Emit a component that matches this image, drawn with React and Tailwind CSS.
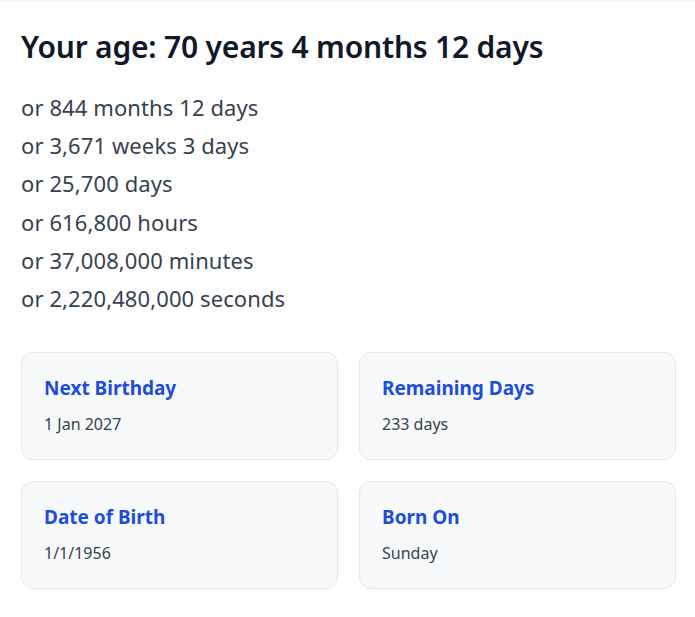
import React from 'react';

const lines = [
    'or 844 months 12 days',
    'or 3,671 weeks 3 days',
    'or 25,700 days',
    'or 616,800 hours',
    'or 37,008,000 minutes',
    'or 2,220,480,000 seconds',
];

const cards = [
    { title: 'Next Birthday', value: '1 Jan 2027' },
    { title: 'Remaining Days', value: '233 days' },
    { title: 'Date of Birth', value: '1/1/1956' },
    { title: 'Born On', value: 'Sunday' },
];

export default function App() {
    return (
        <div
            className="min-h-screen bg-white border-t border-gray-100 pl-[21px] pr-[19px] pt-[26px] pb-8"
            style={{ fontFamily: '"Noto Sans", "Open Sans", sans-serif' }}
        >
            {/* Heading */}
            <h1 className="text-[30px] font-semibold leading-[40px] text-[#111827] tracking-[-0.2px]">
                Your age: 70 years 4 months 12 days
            </h1>

            {/* Alternate units */}
            <div className="mt-[21px]">
                {lines.map((line) => (
                    <p key={line} className="text-[22px] leading-[38.2px] text-[#374151] tracking-[0.1px]">
                        {line}
                    </p>
                ))}
            </div>

            {/* Info cards */}
            <div className="mt-[35px] grid grid-cols-2 gap-[21px]">
                {cards.map((card) => (
                    <div
                        key={card.title}
                        className="h-[108px] rounded-xl border border-[#e5e7eb] bg-[#f8f9fb] px-[22px] pt-[21px]"
                    >
                        <div className="text-[19px] font-bold leading-[28px] text-[#1d4ed8]">
                            {card.title}
                        </div>
                        <div className="mt-[10px] text-[16px] leading-[24px] text-[#374151]">
                            {card.value}
                        </div>
                    </div>
                ))}
            </div>
        </div>
    );
}
